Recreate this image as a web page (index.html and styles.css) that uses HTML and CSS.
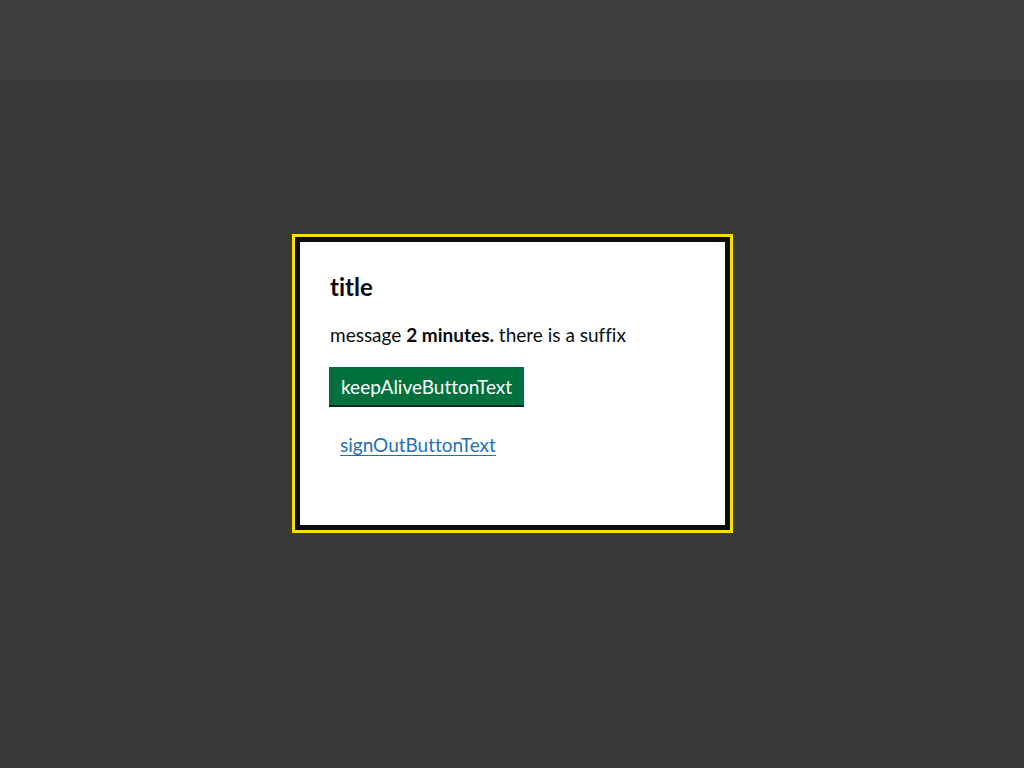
FILE: index.html
```html
<!DOCTYPE html>
<html lang="en">
<head>
<meta charset="utf-8">
<title>Timeout warning</title>
<link rel="stylesheet" href="styles.css">
</head>
<body>
<div class="page">
  <div class="top-band"></div>
  <div class="overlay">
    <div class="dialog" role="dialog" aria-labelledby="dialog-title">
      <h1 class="dialog-title" id="dialog-title">title</h1>
      <p class="dialog-text">message <strong>2 minutes.</strong> there is a suffix</p>
      <button class="button" type="button">keepAliveButtonText</button>
      <div class="link-row"><a class="link" href="#">signOutButtonText</a></div>
    </div>
  </div>
</div>
</body>
</html>
```
FILE: styles.css
```css
html, body {
  margin: 0;
  padding: 0;
  height: 100%;
}
body {
  background: #383838;
  font-family: Lato, "Liberation Sans", sans-serif;
  font-variant-ligatures: none;
  color: #0b0c0c;
}
.page {
  height: 768px;
  display: flex;
  flex-direction: column;
}
.top-band {
  height: 80px;
  background: #3c3d3c;
  flex: none;
}
.overlay {
  flex: 1;
  display: flex;
  justify-content: center;
  align-items: flex-start;
  padding-top: 157px;
}
.dialog {
  box-sizing: border-box;
  width: 435px;
  height: 293px;
  margin-left: 1px;
  background: #fff;
  border: 5px solid #0b0c0c;
  outline: 3px solid #ffdd00;
  padding: 30px;
}
.dialog-title {
  margin: 0 0 20px;
  font-size: 24px;
  line-height: 30px;
  font-weight: 700;
}
.dialog-text {
  margin: 0 0 20px;
  font-size: 19px;
  line-height: 25px;
}
.dialog-text strong {
  font-weight: 700;
}
.button {
  display: block;
  margin: 0 0 0 -1px;
  font-family: inherit;
  font-variant-ligatures: none;
  font-size: 19px;
  line-height: 19px;
  padding: 8px 10px 7px;
  border: 2px solid transparent;
  background: #00703c;
  color: #fff;
  box-shadow: 0 2px 0 #002d18;
  border-radius: 0;
  cursor: pointer;
}
.link-row {
  margin-top: 27px;
  padding-left: 10px;
  font-size: 19px;
  line-height: 25px;
}
.link {
  color: #1d70b8;
  text-decoration: underline;
  text-underline-offset: 3px;
}
```
